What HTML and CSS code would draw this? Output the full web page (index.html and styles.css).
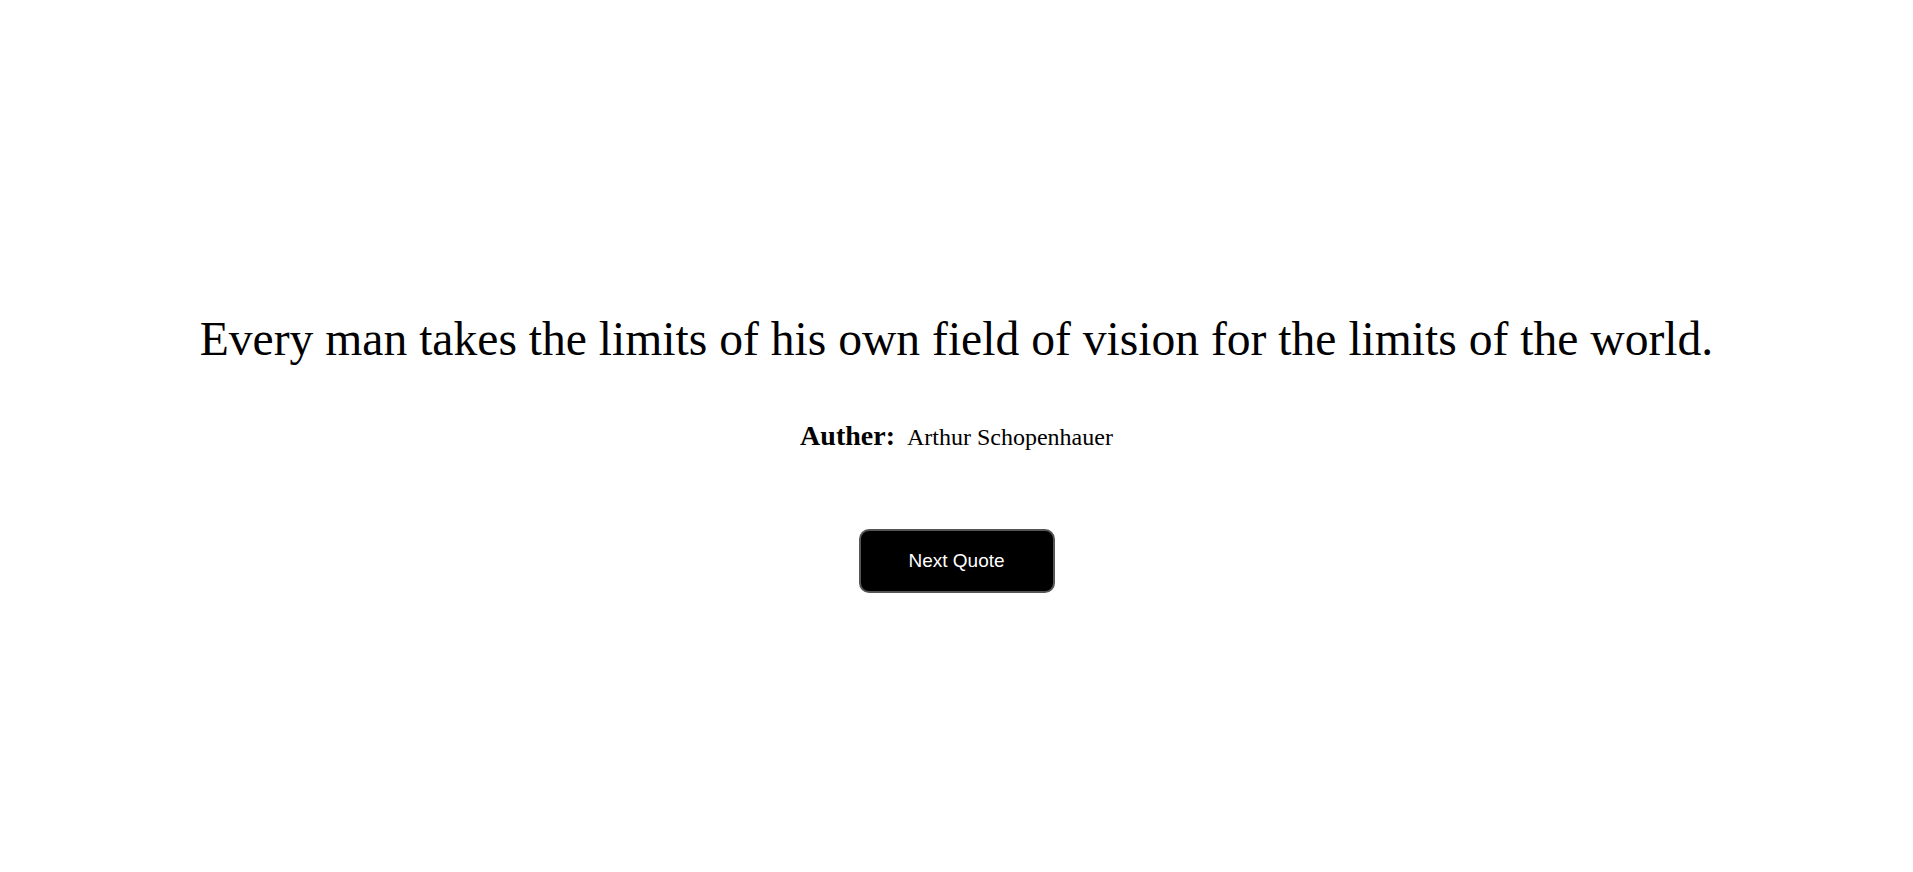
FILE: index.html
```html
<!DOCTYPE html>
<html>
<head>
<meta charset="utf-8">
<link rel="stylesheet" href="styles.css">
</head>
<body>
<main class="page">
  <section class="quote-box">
    <p class="quote">Every man takes the limits of his own field of vision for the limits of the world.</p>
    <p class="author"><span class="author-label">Auther:</span><span class="author-name">Arthur Schopenhauer</span></p>
    <button class="next-btn">Next Quote</button>
  </section>
</main>
</body>
</html>
```
FILE: styles.css
```css
html, body {
  margin: 0;
  padding: 0;
  background: #fff;
}
.page {
  height: 872px;
  display: flex;
  flex-direction: column;
  align-items: center;
  justify-content: center;
  font-family: "Liberation Serif", "Times New Roman", serif;
  color: #000;
}
.quote-box {
  display: flex;
  flex-direction: column;
  align-items: center;
  padding-top: 30px;
}
.quote {
  margin: 0;
  font-size: 47.6px;
  line-height: 58px;
}
.author {
  margin: 52px 0 0;
  font-size: 24px;
  line-height: 32px;
  display: flex;
  align-items: baseline;
  gap: 12px;
}
.author-label {
  font-weight: bold;
  font-size: 28px;
}
.next-btn {
  margin-top: 76px;
  width: 196px;
  height: 64px;
  background: #000;
  color: #fff;
  border: 2px solid #555;
  border-radius: 10px;
  font-family: "Liberation Sans", Arial, sans-serif;
  font-size: 19px;
}
```
